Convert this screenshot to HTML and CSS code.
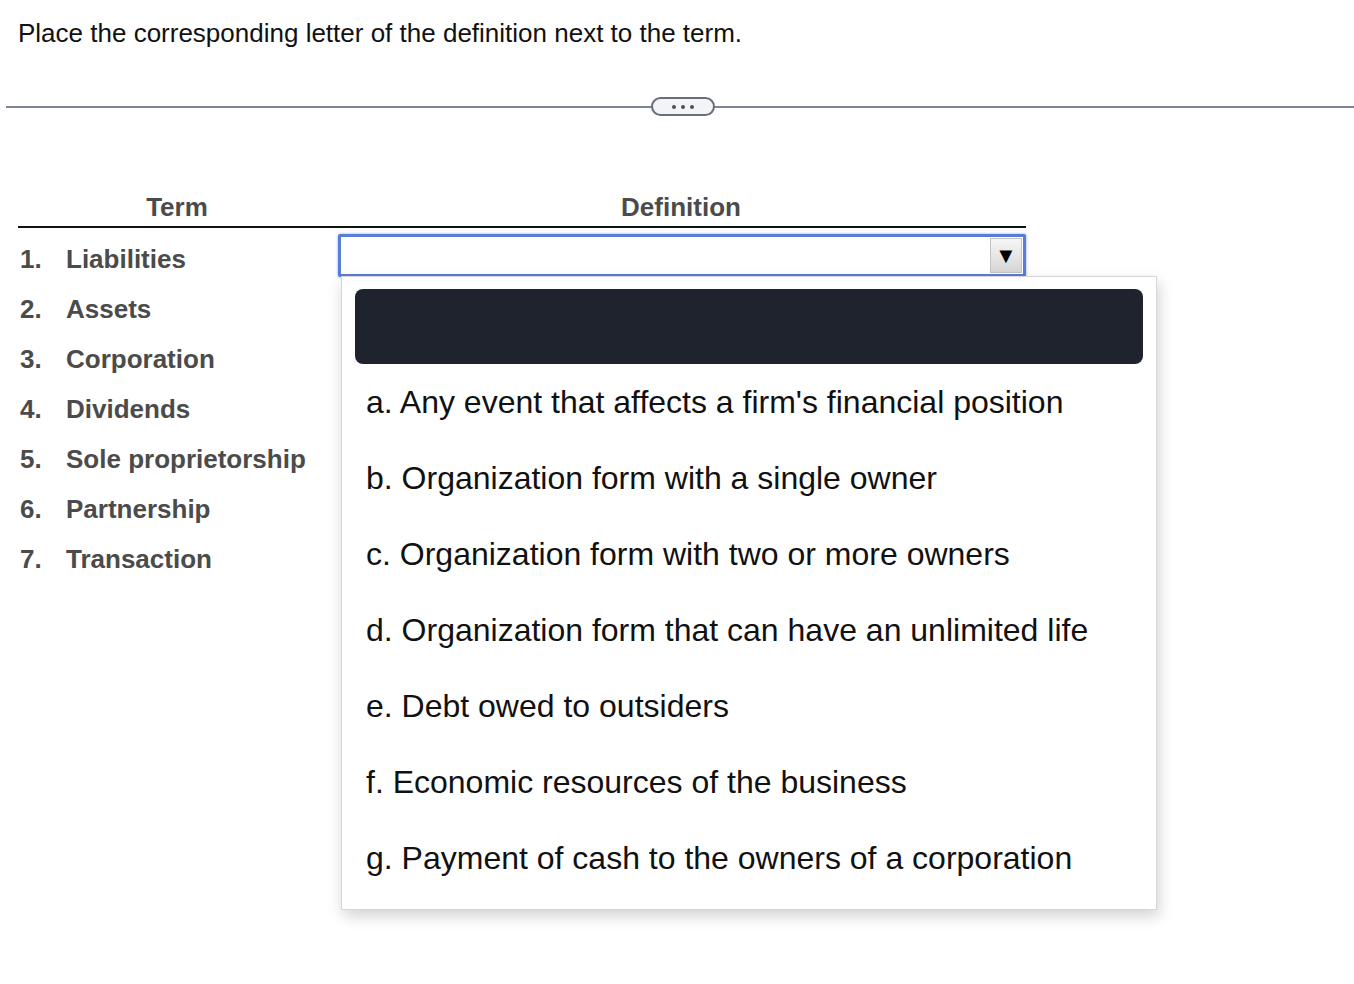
FILE: index.html
```html
<!DOCTYPE html>
<html>
<head>
<meta charset="utf-8">
<link rel="stylesheet" href="styles.css">
</head>
<body>
<p class="prompt">Place the corresponding letter of the definition next to the term.</p>
<div class="divider">
  <span class="pill"><i></i><i></i><i></i></span>
</div>
<div class="match">
  <div class="head">
    <div class="h-term">Term</div>
    <div class="h-def">Definition</div>
  </div>
  <div class="body">
    <ol class="terms">
      <li><span class="num">1.</span>Liabilities</li>
      <li><span class="num">2.</span>Assets</li>
      <li><span class="num">3.</span>Corporation</li>
      <li><span class="num">4.</span>Dividends</li>
      <li><span class="num">5.</span>Sole proprietorship</li>
      <li><span class="num">6.</span>Partnership</li>
      <li><span class="num">7.</span>Transaction</li>
    </ol>
    <div class="defcol">
      <div class="select">
        <span class="arrow">▼</span>
      </div>
      <ul class="menu">
        <li class="selected"></li>
        <li>a. Any event that affects a firm's financial position</li>
        <li>b. Organization form with a single owner</li>
        <li>c. Organization form with two or more owners</li>
        <li>d. Organization form that can have an unlimited life</li>
        <li>e. Debt owed to outsiders</li>
        <li>f. Economic resources of the business</li>
        <li>g. Payment of cash to the owners of a corporation</li>
      </ul>
    </div>
  </div>
</div>
</body>
</html>
```
FILE: styles.css
```css
html, body {
  margin: 0;
  padding: 0;
  background: #ffffff;
  font-family: "Liberation Sans", Arial, sans-serif;
}

body {
  min-height: 984px;
}

.prompt {
  margin: 0;
  padding: 18px 0 0 18px;
  font-size: 26px;
  line-height: 30px;
  color: #111;
}

.divider {
  margin: 58px 0 0 6px;
  height: 2px;
  background: #7d8494;
  position: relative;
}

.pill {
  position: absolute;
  left: 645px;
  top: -9px;
  width: 60px;
  height: 15px;
  border: 2px solid #676e7c;
  border-radius: 10px;
  background: #f3f4f6;
  display: flex;
  align-items: center;
  justify-content: center;
  gap: 5px;
}

.pill i {
  width: 4px;
  height: 4px;
  border-radius: 50%;
  background: #4a4f5a;
}

.match {
  margin: 80px 0 0 18px;
  width: 1008px;
}

.head {
  display: flex;
  height: 38px;
  border-bottom: 2px solid #111;
  font-weight: bold;
  font-size: 26px;
  color: #4b4b4b;
  align-items: center;
}

.h-term {
  width: 318px;
  text-align: center;
}

.h-def {
  flex: 1;
  text-align: center;
}

.body {
  display: flex;
}

.terms {
  list-style: none;
  margin: 0;
  padding: 6px 0 0 0;
  width: 318px;
}

.terms li {
  height: 50px;
  display: flex;
  align-items: center;
  font-weight: bold;
  font-size: 26px;
  color: #4b4b4b;
}

.num {
  width: 48px;
  padding-left: 2px;
  box-sizing: border-box;
}

.defcol {
  position: relative;
  flex: 1;
  padding-top: 6px;
}

.select {
  margin-left: 2px;
  height: 37px;
  border: 3px solid #5b7bd8;
  box-shadow: 0 0 3px rgba(70, 110, 210, 0.6);
  border-radius: 2px;
  background: #fff;
  display: flex;
  justify-content: flex-end;
  align-items: center;
  padding-right: 1px;
}

.arrow {
  width: 32px;
  height: 35px;
  border: 1px solid #c4c4c4;
  box-sizing: border-box;
  background: linear-gradient(#f6f6f6, #d6d6d6);
  display: flex;
  align-items: center;
  justify-content: center;
  font-size: 22px;
  color: #000;
}

.menu {
  position: absolute;
  left: 5px;
  top: 48px;
  width: 816px;
  box-sizing: border-box;
  margin: 0;
  padding: 12px 13px 13px;
  list-style: none;
  background: #fff;
  border: 1px solid #d6d6d6;
  box-shadow: 2px 6px 14px rgba(0, 0, 0, 0.18);
}

.menu li {
  height: 76px;
  display: flex;
  align-items: center;
  padding-left: 11px;
  font-size: 32px;
  color: #111;
}

.menu li.selected {
  height: 75px;
  background: #1f232d;
  border-radius: 8px;
}
```
